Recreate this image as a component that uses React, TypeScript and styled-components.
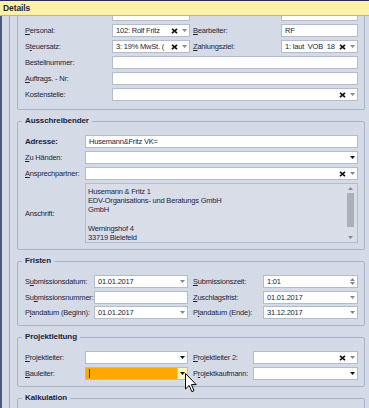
import { useLayoutEffect, useRef, type ReactNode } from "react";
import styled, { createGlobalStyle } from "styled-components";

const colors = {
  panel: "#d5dae7",
  frame: "#a9b4c8",
  outer: "#9aa6bc",
  edge: "#4b5a78",
  inputBorder: "#b3bccb",
  white: "#fff",
  text: "#1e2636",
  value: "#1b2540",
  muted: "#7f8898",
  header: "#fcf1a8",
  orange: "#ffa800",
  memo: "#d9dde8",
  thumb: "#a9b0bc",
};

const GlobalStyle = createGlobalStyle`
  html, body {
    margin: 0;
    padding: 0;
  }

  body {
    background: ${colors.panel};
    font-family: "Liberation Sans", Arial, sans-serif;
  }
`;

const Window = styled.div`
  position: relative;
  width: 369px;
  height: 408px;
  display: flex;
  flex-direction: column;
  overflow: hidden;
  background: ${colors.panel};
  color: ${colors.text};
  font-size: 7.5px;
  letter-spacing: -0.2px;
`;

const Header = styled.header`
  flex: none;
  height: 14px;
  display: flex;
  align-items: center;
  padding-left: 3px;
  border-top: 1px solid #22314f;
  border-bottom: 1px solid #c4b66c;
  background: ${colors.header};
  font-weight: bold;
  font-size: 8.5px;
  letter-spacing: -0.1px;
`;

const Body = styled.div`
  flex: 1;
  display: flex;
  min-height: 0;
  border-left: 2px solid ${colors.edge};
`;

const Viewport = styled.div`
  position: relative;
  flex: 1;
  margin-left: 7px;
  padding: 0 4px 0 7px;
  border-left: 1px solid ${colors.outer};
  overflow: hidden;
  display: flex;
  flex-direction: column;
  gap: 6px;
`;

const Group = styled.fieldset<{ $bottom?: number }>`
  flex: none;
  margin: 0;
  min-width: 0;
  padding: 9px 6px ${(p) => p.$bottom ?? 6}px 7px;
  border: 1px solid ${colors.frame};
  border-radius: 2px;
`;

const Title = styled.legend`
  margin-left: -3px;
  padding: 0 3px;
  font-weight: bold;
  font-size: 8px;
  line-height: 10px;
  letter-spacing: -0.1px;
  color: #1a2338;
`;

const Form = styled.div<{ $cols: string; $gap?: number }>`
  display: grid;
  grid-template-columns: ${(p) => p.$cols};
  row-gap: ${(p) => p.$gap ?? 3}px;
  align-items: center;
`;

const Label = styled.label<{ $indent?: number; $bold?: boolean }>`
  padding-left: ${(p) => p.$indent ?? 0}px;
  white-space: nowrap;
  overflow: hidden;
  font-weight: ${(p) => (p.$bold ? "bold" : "normal")};
  font-size: ${(p) => (p.$bold ? "8px" : "inherit")};
`;

const U = styled.span`
  text-decoration: underline;
  text-underline-offset: 1px;
`;

const Field = styled.div<{ $span?: number; $active?: boolean }>`
  grid-column: span ${(p) => p.$span ?? 1};
  box-sizing: border-box;
  height: 13px;
  min-width: 0;
  display: flex;
  align-items: center;
  padding-left: 3px;
  border: 1px solid ${colors.inputBorder};
  background: ${(p) => (p.$active ? colors.orange : colors.white)};
  color: ${colors.value};
`;

const Value = styled.span`
  flex: 1;
  min-width: 0;
  overflow: hidden;
  white-space: pre;
`;

const Caret = styled.span`
  width: 1px;
  height: 9px;
  background: #333;
`;

const Button = styled.span<{ $hot?: boolean }>`
  flex: none;
  align-self: stretch;
  width: 10px;
  display: flex;
  align-items: center;
  justify-content: center;
  box-sizing: border-box;
  background: ${(p) => (p.$hot ? "#fdf5c2" : "transparent")};
  border-left: 1px solid ${(p) => (p.$hot ? "#e3cf83" : "transparent")};
`;

const Spin = styled.span`
  flex: none;
  width: 10px;
  display: flex;
  flex-direction: column;
  align-items: center;
  gap: 1px;
`;

const Memo = styled.div`
  box-sizing: border-box;
  height: 60px;
  display: flex;
  border: 1px solid ${colors.inputBorder};
  background: ${colors.memo};
  color: ${colors.value};
`;

const MemoText = styled.div`
  flex: 1;
  padding: 3px 2px;
  line-height: 9.2px;
  white-space: pre;
  overflow: hidden;
`;

const ScrollBar = styled.div`
  flex: none;
  width: 9px;
  margin: 3px 2px 3px 0;
  display: flex;
  flex-direction: column;
  align-items: center;
  justify-content: space-between;
`;

const Thumb = styled.div`
  flex: 1;
  width: 7px;
  margin: 3px 0 9px;
  background: ${colors.thumb};
`;

const Pointer = styled.svg`
  position: absolute;
  left: 185px;
  top: 373px;
`;

const ClearIcon = () => (
  <svg width="7" height="6" viewBox="0 0 7 6">
    <path d="M1 0.8 L6 5.2 M6 0.8 L1 5.2" stroke="#111" strokeWidth="1.6" />
  </svg>
);

const Arrow = ({ dark, up }: { dark?: boolean; up?: boolean }) => (
  <svg width="5" height="3" viewBox="0 0 5 3">
    <path
      d={up ? "M0 3 L5 3 L2.5 0 Z" : "M0 0 L5 0 L2.5 3 Z"}
      fill={dark ? "#111" : colors.muted}
    />
  </svg>
);

type InputProps = {
  value?: string;
  span?: number;
  clear?: boolean;
  drop?: boolean;
  dark?: boolean;
  spin?: boolean;
  active?: boolean;
  inputRef?: React.Ref<HTMLDivElement>;
};

const Input = ({
  value,
  span,
  clear,
  drop,
  dark,
  spin,
  active,
  inputRef,
}: InputProps) => (
  <Field ref={inputRef} $span={span} $active={active}>
    {active && <Caret />}
    <Value>{value}</Value>
    {clear && (
      <Button>
        <ClearIcon />
      </Button>
    )}
    {drop && (
      <Button $hot={active}>
        <Arrow dark={dark || active} />
      </Button>
    )}
    {spin && (
      <Spin>
        <Arrow up />
        <Arrow />
      </Spin>
    )}
  </Field>
);

const L = ({
  children,
  indent,
  bold,
}: {
  children?: ReactNode;
  indent?: number;
  bold?: boolean;
}) => (
  <Label $indent={indent} $bold={bold}>
    {children}
  </Label>
);

const App = () => {
  const viewportRef = useRef<HTMLDivElement>(null);
  const anchorRef = useRef<HTMLDivElement>(null);

  // scrolled down so that "Personal" sits right under the header
  useLayoutEffect(() => {
    if (viewportRef.current && anchorRef.current) {
      viewportRef.current.scrollTop = anchorRef.current.offsetTop - 8;
    }
  }, []);

  return (
    <Window>
      <GlobalStyle />
      <Header>Details</Header>
      <Body>
        <Viewport ref={viewportRef}>
          <Group $bottom={8}>
            <Form $cols="87px 78px 91px 1fr">
              <L />
              <Input />
              <L indent={3} />
              <Input />
              <L>
                <U>P</U>ersonal:
              </L>
              <Input inputRef={anchorRef} value="102: Rolf Fritz" clear drop />
              <L indent={3}>
                <U>B</U>earbeiter:
              </L>
              <Input value="RF" />
              <L>
                S<U>t</U>euersatz:
              </L>
              <Input value="3: 19% MwSt. (" clear drop />
              <L indent={3}>
                <U>Z</U>ahlungsziel:
              </L>
              <Input value="1: laut  VOB  18" clear drop />
              <L>Bestellnummer:</L>
              <Input span={3} />
              <L>
                <U>A</U>uftrags. - Nr:
              </L>
              <Input span={3} />
              <L>Kostenstelle:</L>
              <Input span={3} clear drop />
            </Form>
          </Group>

          <Group>
            <Title>Ausschreibender</Title>
            <Form $cols="60px 1fr">
              <L bold>Adresse:</L>
              <Input value="Husemann&Fritz VK=" />
              <L>
                <U>Z</U>u Händen:
              </L>
              <Input drop dark />
              <L>
                <U>A</U>nsprechpartner:
              </L>
              <Input clear drop />
              <L>Anschrift:</L>
              <Memo>
                <MemoText>
                  {
                    "Husemann & Fritz 1\nEDV-Organisations- und Beratungs GmbH\nGmbH\n\nWerningshof 4\n33719 Bielefeld"
                  }
                </MemoText>
                <ScrollBar>
                  <Arrow up />
                  <Thumb />
                  <Arrow />
                </ScrollBar>
              </Memo>
            </Form>
          </Group>

          <Group>
            <Title>Fristen</Title>
            <Form $cols="69px 94px 75px 1fr" $gap={2.5}>
              <L>
                S<U>u</U>bmissionsdatum:
              </L>
              <Input value="01.01.2017" drop />
              <L indent={5}>
                <U>S</U>ubmissionszeit:
              </L>
              <Input value="1:01" spin />
              <L>
                Su<U>b</U>missionsnummer:
              </L>
              <Input />
              <L indent={5}>
                <U>Z</U>uschlagsfrist:
              </L>
              <Input value="01.01.2017" drop />
              <L>
                P<U>l</U>andatum (Beginn):
              </L>
              <Input value="01.01.2017" drop />
              <L indent={5}>
                P<U>l</U>andatum (Ende):
              </L>
              <Input value="31.12.2017" drop />
            </Form>
          </Group>

          <Group>
            <Title>Projektleitung</Title>
            <Form $cols="60px 103px 65px 1fr">
              <L>
                <U>P</U>rojektleiter:
              </L>
              <Input drop dark />
              <L indent={5}>
                <U>P</U>rojektleiter 2:
              </L>
              <Input clear drop />
              <L>
                <U>B</U>auleiter:
              </L>
              <Input active drop />
              <L indent={5}>
                P<U>r</U>ojektkaufmann:
              </L>
              <Input drop dark />
            </Form>
          </Group>

          <Group>
            <Title>Kalkulation</Title>
            <Form $cols="60px 103px 65px 1fr">
              <L />
              <Input />
              <L indent={5} />
              <Input />
            </Form>
          </Group>
        </Viewport>
      </Body>
      <Pointer width="12" height="20" viewBox="0 0 12 20">
        <path
          d="M0.5 0.5 L0.5 16 L4.2 12.4 L6.8 18.6 L9 17.7 L6.4 11.6 L11.2 11.6 Z"
          fill="#fff"
          stroke="#000"
          strokeWidth="1"
          strokeLinejoin="round"
        />
      </Pointer>
    </Window>
  );
};

export default App;
